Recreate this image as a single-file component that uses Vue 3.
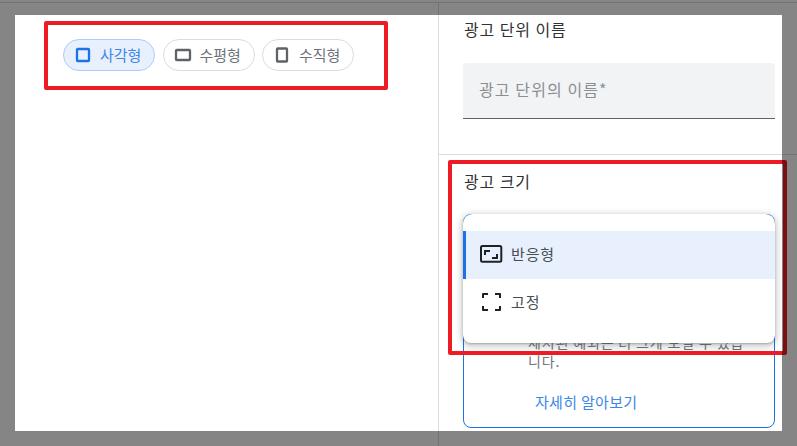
<script setup>
const chips = [
  { label: '사각형', active: true, shape: { x: 3, y: 3, w: 12, h: 12 } },
  { label: '수평형', active: false, shape: { x: 2, y: 4, w: 14, h: 10 } },
  { label: '수직형', active: false, shape: { x: 4, y: 2.5, w: 10, h: 13 } },
]
</script>

<template>
  <div class="page">
    <section class="left">
      <div class="chips">
        <button v-for="c in chips" :key="c.label" class="chip" :class="{ active: c.active }">
          <svg class="chip-icon" width="18" height="18" viewBox="0 0 18 18">
            <rect :x="c.shape.x" :y="c.shape.y" :width="c.shape.w" :height="c.shape.h" rx="0.8" fill="none" stroke="currentColor" stroke-width="2.3" />
          </svg>
          <span class="chip-text">{{ c.label }}</span>
        </button>
      </div>
    </section>

    <section class="right">
      <div class="block name-block">
        <div class="label">광고 단위 이름</div>
        <div class="field">광고 단위의 이름*</div>
      </div>
      <div class="block size-block">
        <div class="label">광고 크기</div>
        <div class="outlined">
          <p class="note">제시된 예외는 더 크게 보일 수 있습니다.</p>
          <a class="learn">자세히 알아보기</a>
          <div class="menu">
            <div class="item selected">
              <svg width="24" height="24" viewBox="0 0 24 24" fill="none" stroke="#202124" stroke-width="2">
                <rect x="2" y="4" width="20.3" height="15.7" rx="1.5" />
                <path d="M6 13V9h5M18 12v4h-5" />
              </svg>
              <span>반응형</span>
            </div>
            <div class="item">
              <svg width="24" height="24" viewBox="0 0 24 24" fill="none" stroke="#202124" stroke-width="2" stroke-linejoin="round">
                <path d="M9 4H4v4M16 4h5v4M9 20H4v-4M16 20h5v-4" />
              </svg>
              <span>고정</span>
            </div>
          </div>
        </div>
      </div>
    </section>

    <div class="mark mark-chips"></div>
    <div class="mark mark-size"></div>
    <div class="dim"></div>
  </div>
</template>

<style>
html, body { margin: 0; background: #848484; }
</style>

<style scoped>
.page {
  position: relative;
  display: flex;
  width: 797px;
  height: 446px;
  overflow: hidden;
  box-sizing: border-box;
  margin: 0;
  padding-top: 3px;
  background: #fff;
  box-shadow: inset 0 2px 0 #fff, inset 0 3px 0 #dadce0;
  font-family: "Noto Sans CJK KR", "Noto Sans", sans-serif;
  font-size: 14px;
  color: #303336;
}
.left {
  box-sizing: border-box;
  width: 439px;
  height: 100%;
  padding: 36px 0 0 63px;
  border-right: 1px solid #dadce0;
}
.chips { display: flex; gap: 7.5px; }
.chip {
  display: flex;
  align-items: center;
  gap: 8px;
  box-sizing: border-box;
  width: 92px;
  height: 32px;
  padding: 0 0 0 10px;
  border: 1px solid #dadce0;
  border-radius: 16px;
  background: #fff;
  color: #6f7377;
  font: inherit;
  font-size: 15px;
}
.chip svg { color: #5f6368; }
.chip-text { position: relative; top: -1px; }
.chip.active {
  background: #e8f0fe;
  border-color: #aecbfa;
  color: #3b86ea;
}
.chip.active svg { color: #1a73e8; }
.chip-icon { flex: none; }
.right { flex: 1; display: flex; flex-direction: column; }
.block { padding: 16px 22px 0 24px; }
.name-block {
  box-sizing: border-box;
  height: 152px;
  border-bottom: 1px solid #dadce0;
}
.label {
  height: 20px;
  padding-left: 1px;
  line-height: 20px;
  font-size: 16px;
  letter-spacing: 0.9px;
  white-space: nowrap;
}
.field {
  box-sizing: border-box;
  height: 56px;
  margin-top: 24px;
  padding-left: 16px;
  background: #f1f3f4;
  border-bottom: 1px solid #5f6368;
  border-radius: 4px 4px 0 0;
  line-height: 52px;
  font-size: 16px;
  letter-spacing: 1.1px;
  color: #8a8f94;
}
.outlined {
  position: relative;
  box-sizing: border-box;
  height: 214px;
  margin-top: 23px;
  padding: 118px 24px 0 64px;
  border: 1px solid #1a73e8;
  border-radius: 8px;
  font-size: 14px;
  letter-spacing: 0.85px;
  color: #6f7377;
}
.note { margin: 0; line-height: 19px; }
.learn {
  display: block;
  margin: 21px 0 0 7px;
  line-height: 20px;
  font-size: 15px;
  letter-spacing: 0.3px;
  color: #3b86ea;
}
.menu {
  position: absolute;
  left: -1px;
  right: -1px;
  top: -1px;
  height: 129px;
  box-sizing: border-box;
  padding: 17px 0 16px;
  background: #fff;
  border-radius: 9.5px 9.5px 8px 8px;
  box-shadow: 0 2px 6px 2px rgba(60, 64, 67, 0.25), 0 1px 2px rgba(60, 64, 67, 0.3);
  color: #4a4e52;
}
.item {
  display: flex;
  align-items: center;
  gap: 8px;
  box-sizing: border-box;
  height: 48px;
  padding-left: 16px;
  font-size: 15px;
}
.item span { position: relative; top: -2px; }
.item.selected {
  background: #e8f0fe;
  border-left: 3px solid #1a73e8;
  padding-left: 13px;
}
.item svg { position: relative; top: -1px; }
.mark {
  position: absolute;
  box-sizing: border-box;
  border: 4px solid #ed1c24;
  border-radius: 2px;
  pointer-events: none;
}
.mark-chips { left: 44px; top: 21px; width: 344px; height: 69px; }
.mark-size { left: 448px; top: 160px; width: 339px; height: 195px; }
.dim {
  position: absolute;
  left: 15px;
  top: 15px;
  width: 767px;
  height: 416px;
  box-shadow: 0 0 0 800px rgba(0, 0, 0, 0.48);
  pointer-events: none;
}
</style>
